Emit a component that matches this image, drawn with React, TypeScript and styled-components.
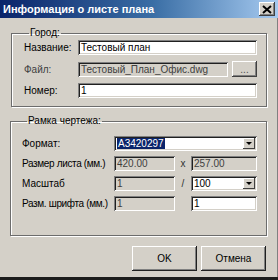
import styled, { createGlobalStyle } from 'styled-components';

const GlobalStyle = createGlobalStyle`
  html, body {
    margin: 0;
    padding: 0;
    background: #d4d0c8;
  }
  body {
    font-family: "Liberation Sans", Arial, sans-serif;
    font-size: 10px;
    color: #000;
  }
`;

const App = () => {
  return (
    <>
      <GlobalStyle />
      <Window>
        <TitleBar>
          <Title>Информация о листе плана</Title>
          <CloseButton>
            <svg width="10" height="9" viewBox="0 0 10 9">
              <path d="M1 1 L9 8 M9 1 L1 8" stroke="#000" strokeWidth="2" />
            </svg>
          </CloseButton>
        </TitleBar>

        <Body>
          <GroupBox>
            <Legend>Город:</Legend>
            <CityGrid>
              <Label>Название:</Label>
              <TextField>Тестовый план</TextField>

              <Label $muted>Файл:</Label>
              <FileRow>
                <TextField $disabled>Тестовый_План_Офис.dwg</TextField>
                <SmallButton>...</SmallButton>
              </FileRow>

              <Label>Номер:</Label>
              <TextField>1</TextField>
            </CityGrid>
          </GroupBox>

          <GroupBox $frame>
            <Legend>Рамка чертежа:</Legend>
            <FrameGrid>
              <Label>Формат:</Label>
              <Combo $span>
                <Selected>A3420297</Selected>
                <DropButton>
                  <Arrow />
                </DropButton>
              </Combo>

              <Label $tight>Размер листа (мм.)</Label>
              <TextField $disabled>420.00</TextField>
              <Sep>x</Sep>
              <TextField $disabled>257.00</TextField>

              <Label>Масштаб</Label>
              <TextField $disabled>1</TextField>
              <Sep>/</Sep>
              <Combo>
                <span>100</span>
                <DropButton>
                  <Arrow />
                </DropButton>
              </Combo>

              <Label $tight>Разм. шрифта (мм.)</Label>
              <TextField $disabled>1</TextField>
              <Sep />
              <TextField>1</TextField>
            </FrameGrid>
          </GroupBox>

          <ButtonRow>
            <PushButton>OK</PushButton>
            <PushButton>Отмена</PushButton>
          </ButtonRow>
        </Body>
      </Window>
    </>
  );
};

export default App;

const Window = styled.div`
  width: 278px;
  height: 280px;
  box-sizing: border-box;
  background: #d4d0c8;
  display: flex;
  flex-direction: column;
  border-bottom: 3px solid #1c1c1c;
  box-shadow: inset -1px 0 0 #808080;
`;

const TitleBar = styled.div`
  height: 18px;
  flex: none;
  display: flex;
  align-items: center;
  justify-content: space-between;
  padding: 0 3px 0 3px;
  background: linear-gradient(90deg, #0a246a 0%, #3a6ea5 55%, #a6caf0 100%);
`;

const Title = styled.span`
  color: #fff;
  font-weight: bold;
  font-size: 11px;
`;

const CloseButton = styled.div`
  width: 16px;
  height: 14px;
  box-sizing: border-box;
  background: #d4d0c8;
  display: flex;
  align-items: center;
  justify-content: center;
  box-shadow: inset -1px -1px #404040, inset 1px 1px #fff,
    inset -2px -2px #808080;
`;

const Body = styled.div`
  flex: 1;
  display: flex;
  flex-direction: column;
  padding: 9px 11px 0 10px;
`;

const GroupBox = styled.fieldset<{ $frame?: boolean }>`
  margin: ${(p) => (p.$frame ? '8px 0 0 0' : '0 0 0 1px')};
  padding: ${(p) => (p.$frame ? '9px 9px 24px 11px' : '1px 9px 8px 12px')};
  border: 1px solid #6c6c6c;
  box-shadow: 1px 1px 0 #fff, inset 1px 1px 0 #fff;
  min-width: 0;
`;

const Legend = styled.legend`
  padding: 0 1px;
  margin-left: 5px;
  font-size: 10px;
  line-height: 12px;
`;

const CityGrid = styled.div`
  display: grid;
  grid-template-columns: 54px 1fr;
  row-gap: 6px;
  align-items: center;
`;

const FrameGrid = styled.div`
  display: grid;
  grid-template-columns: 92px 61px 16px 1fr;
  row-gap: 5px;
  align-items: center;
`;

const Label = styled.span<{ $muted?: boolean; $tight?: boolean }>`
  font-size: 10px;
  white-space: nowrap;
  letter-spacing: ${(p) => (p.$tight ? '-0.35px' : '0')};
  color: ${(p) => (p.$muted ? '#404040' : '#000')};
`;

const TextField = styled.div<{ $disabled?: boolean }>`
  height: 15px;
  box-sizing: border-box;
  padding: 2px 3px 0;
  font-size: 10px;
  line-height: 11px;
  white-space: nowrap;
  overflow: hidden;
  min-width: 0;
  background: ${(p) => (p.$disabled ? '#d4d0c8' : '#fff')};
  color: ${(p) => (p.$disabled ? '#404040' : '#000')};
  box-shadow: inset 1px 1px #808080, inset -1px -1px #fff,
    inset 2px 2px #202020, inset -2px -2px #d4d0c8;
`;

const FileRow = styled.div`
  display: grid;
  grid-template-columns: 1fr 25px;
  column-gap: 4px;
  align-items: center;
`;

const SmallButton = styled.div`
  height: 16px;
  box-sizing: border-box;
  display: flex;
  align-items: center;
  justify-content: center;
  font-size: 10px;
  color: #505050;
  box-shadow: inset -1px -1px #404040, inset 1px 1px #fff,
    inset -2px -2px #808080;
`;

const Combo = styled.div<{ $span?: boolean }>`
  grid-column: ${(p) => (p.$span ? '2 / 5' : 'auto')};
  height: 15px;
  box-sizing: border-box;
  display: flex;
  align-items: center;
  justify-content: space-between;
  padding: 2px 2px 2px 3px;
  background: #fff;
  font-size: 10px;
  box-shadow: inset 1px 1px #808080, inset -1px -1px #fff,
    inset 2px 2px #202020, inset -2px -2px #d4d0c8;
`;

const Selected = styled.span`
  background: #0a246a;
  color: #fff;
  padding: 0 1px;
  line-height: 11px;
`;

const DropButton = styled.div`
  width: 12px;
  height: 11px;
  box-sizing: border-box;
  background: #d4d0c8;
  display: flex;
  align-items: center;
  justify-content: center;
  box-shadow: inset -1px -1px #404040, inset 1px 1px #fff;
`;

const Arrow = styled.span`
  width: 0;
  height: 0;
  border-left: 3px solid transparent;
  border-right: 3px solid transparent;
  border-top: 3px solid #000;
`;

const Sep = styled.span`
  text-align: center;
  font-size: 10px;
  color: #303030;
`;

const ButtonRow = styled.div`
  display: flex;
  justify-content: flex-end;
  gap: 4px;
  margin-top: 10px;
  padding-right: 1px;
`;

const PushButton = styled.div`
  width: 65px;
  height: 25px;
  box-sizing: border-box;
  display: flex;
  align-items: center;
  justify-content: center;
  font-size: 10px;
  box-shadow: inset -1px -1px #202020, inset 1px 1px #fff,
    inset -2px -2px #808080;
`;
